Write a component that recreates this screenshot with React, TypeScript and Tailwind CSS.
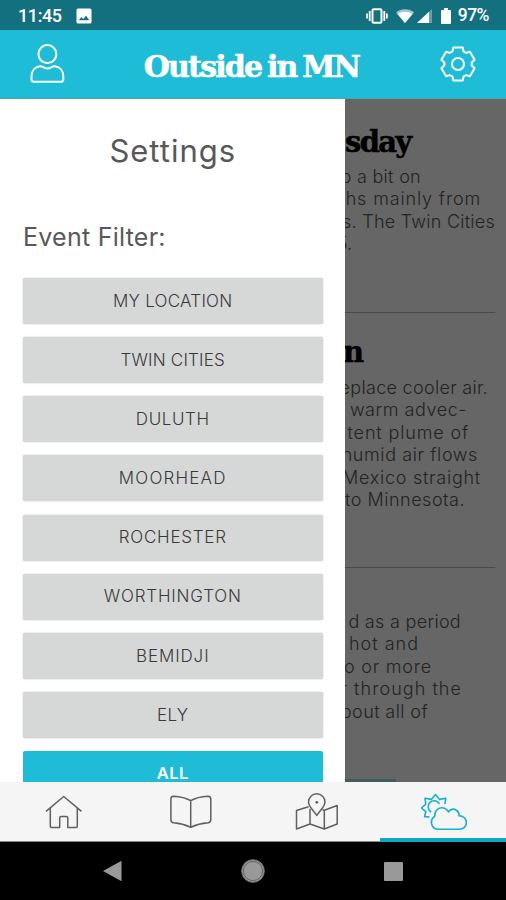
import type { ReactNode } from 'react';

const filters = [
  { label: 'MY LOCATION', tracking: 'tracking-[0.25px]' },
  { label: 'TWIN CITIES', tracking: 'tracking-[0.2px]' },
  { label: 'DULUTH', tracking: 'tracking-[0.6px]' },
  { label: 'MOORHEAD', tracking: 'tracking-[1.2px]' },
  { label: 'ROCHESTER', tracking: 'tracking-[0.75px]' },
  { label: 'WORTHINGTON', tracking: 'tracking-[0.8px]' },
  { label: 'BEMIDJI', tracking: 'tracking-[0.9px]' },
  { label: 'ELY', tracking: 'tracking-[0.4px]' },
];

const forecast = [
  { text: 'up a bit on', style: 'pr-[85px] tracking-[0.3px]' },
  { text: 'ths mainly from', style: 'pr-[25px] tracking-[0.85px]' },
  { text: 's. The Twin Cities', style: 'pr-[11px] tracking-[0.25px]' },
  { text: '5.', style: 'pr-[154px]' },
];

const pattern = [
  { text: 'replace cooler air.', style: 'pr-[18px] tracking-[0.3px]' },
  { text: 'warm advec-', style: 'pr-[39px] tracking-[0.55px]' },
  { text: 'tent plume of', style: 'pr-[37px] tracking-[0.85px]' },
  { text: 'humid air flows', style: 'pr-[28px] tracking-[0.6px]' },
  { text: 'Mexico straight', style: 'pr-[25px] tracking-[0.75px]' },
  { text: 'to Minnesota.', style: 'pr-[41px] tracking-[0.5px]' },
];

const heatWave = [
  { text: 'd as a period', style: 'pr-[45px] tracking-[0.3px]' },
  { text: 'hot and', style: 'pr-[87px] tracking-[1px]' },
  { text: 'wo or more', style: 'pr-[74px] tracking-[0.8px]' },
  { text: 'r through the', style: 'pr-[44px] tracking-[1.05px]' },
  { text: 'about all of', style: 'pr-[78px] tracking-[0.4px]' },
];

function StatusBar() {
  return (
    <div className="h-[30px] bg-[#13707e] flex items-center justify-between pl-[18px] pr-[17px] text-white font-['Roboto',sans-serif] font-medium text-[18px] shrink-0">
      <div className="flex items-center gap-[14px] pt-px">
        <span className="tracking-[-0.4px]">11:45</span>
        <svg width="16" height="16" viewBox="0 0 16 16">
          <path fill="#fff" fillRule="evenodd" d="M2 0.5h12a1.5 1.5 0 0 1 1.5 1.5v12a1.5 1.5 0 0 1-1.5 1.5H2A1.5 1.5 0 0 1 .5 14V2A1.5 1.5 0 0 1 2 .5ZM2.7 12.3h10.6L10 7.8l-2.7 3.3-1.8-2Z" />
        </svg>
      </div>
      <div className="flex items-center pt-px">
        <svg width="22" height="16" viewBox="0 0 22 16" fill="none" stroke="#fff" className="mr-[8px]">
          <rect x="6.5" y="1.2" width="9" height="13.6" rx="1.2" strokeWidth="2" />
          <path strokeWidth="1.8" d="M3.7 3v10M18.3 3v10M1.1 5.5v5M20.9 5.5v5" />
        </svg>
        <svg width="18" height="14" viewBox="0 0 18 14" className="mr-[3px]">
          <path fill="#fff" fillOpacity="0.6" d="M0 3.2C5-.8 13-.8 18 3.2L9 14Z" />
          <path fill="#fff" d="M1.500 5C6 2 12 2 16.500 5L9 14Z" />
        </svg>
        <svg width="15" height="14" viewBox="0 0 15 14" className="mr-[9px]">
          <path fill="#fff" fillOpacity="0.35" d="M0 14 15 0v14Z" />
          <path fill="#fff" d="M0 14 12 2.800V14Z" />
        </svg>
        <svg width="10" height="16" viewBox="0 0 10 16" className="mr-[7px]">
          <path fill="#fff" d="M3 0h4v2h2q1 0 1 1v12q0 1-1 1H1q-1 0-1-1V3q0-1 1-1h2Z" />
        </svg>
        <span className="text-[17.5px] tracking-[-0.5px]">97%</span>
      </div>
    </div>
  );
}

function Header() {
  return (
    <div className="h-[69px] bg-[#1ebcd6] flex items-center justify-between px-[27px] shrink-0 border-b border-[#4aa5b3]">
      <svg width="40" height="44" viewBox="0 0 40 44" fill="none" stroke="#fff" strokeWidth="2" strokeLinejoin="round">
        <circle cx="20.4" cy="12.100" r="9" />
        <path d="M12.800 24.300C16 24 17 26.600 20.400 26.600S24.800 24 28 24.300C33.500 25 36.300 29.500 36.300 34.500V37.500Q36.300 39.800 34 39.800H6.800Q4.500 39.800 4.500 37.500V34.500C4.500 29.500 7.300 25 12.800 24.300Z" />
      </svg>
      <h1 className="mt-[5px] mr-[3px] text-white font-['DejaVu_Serif',serif] font-bold text-[30px] leading-none tracking-[-1.800px] [word-spacing:-3px] [-webkit-text-stroke:0.6px_white] whitespace-nowrap">
        Outside in MN
      </h1>
      <svg width="40" height="40" viewBox="-19 -20 40 40" fill="none" stroke="#fff" strokeWidth="2" strokeLinejoin="round">
        <path d="M-4.700-16.500H4.700L5.500-12.700 8.200-11.100 11.900-12.300 16.600-4.200 13.700-1.600V1.600L16.600 4.200 11.900 12.300 8.200 11.100 5.500 12.700 4.700 16.500H-4.700L-5.500 12.700-8.200 11.100-11.900 12.300-16.600 4.200-13.700 1.600V-1.600L-16.600-4.200-11.900-12.300-8.200-11.100-5.500-12.700Z" />
        <circle r="6" />
      </svg>
    </div>
  );
}

function SettingsDrawer() {
  return (
    <div className="w-[345px] bg-white shrink-0 pl-[23px] pr-[22.5px] overflow-hidden text-[#58585a]">
      <h2 className="mt-[32px] h-[40px] leading-[40px] text-center text-[31px] tracking-[1px]">Settings</h2>
      <h3 className="mt-[46px] h-[40px] leading-[40px] text-[25px] tracking-[0.25px] whitespace-nowrap">
        Event Filter:
      </h3>
      <div className="mt-[21px] flex flex-col gap-[13.150px]">
        {filters.map((filter) => (
          <button
            key={filter.label}
            className={`h-[46px] w-full shrink-0 rounded-[2px] bg-[#d6d8d7] shadow-[0_0_1.500px_rgba(0,0,0,0.3)] text-[#3a3a3a] text-[17px] font-light pt-px ${filter.tracking}`}
          >
            {filter.label}
          </button>
        ))}
        <button className="h-[46px] w-full shrink-0 rounded-[2px] bg-[#1ebcd6] text-white text-[16.5px] font-semibold tracking-[0.5px] pb-[2px]">
          ALL
        </button>
      </div>
    </div>
  );
}

function Lines({ lines }: { lines: { text: string; style: string }[] }) {
  return (
    <div className="text-[18px] leading-[22.400px] text-[#232323] font-[350]">
      {lines.map((line) => (
        <div key={line.text} className={`flex justify-end whitespace-nowrap ${line.style}`}>
          {line.text}
        </div>
      ))}
    </div>
  );
}

function Heading({ children }: { children: ReactNode }) {
  return (
    <h2 className="h-[36px] leading-[36px] font-['DejaVu_Serif',serif] font-bold text-[29px] tracking-[-1.700px] [-webkit-text-stroke:0.5px_black] text-black">
      {children}
    </h2>
  );
}

function Forecast() {
  return (
    <div className="flex-1 bg-[#666666] overflow-hidden flex flex-col">
      <section className="h-[214px] shrink-0 mr-[11px] border-b border-[#4b4b4b]">
        <div className="pt-[25px] -mr-[11px]">
          <Heading>sday</Heading>
          <div className="pt-[6px]">
            <Lines lines={forecast} />
          </div>
        </div>
      </section>
      <section className="h-[255px] shrink-0 mr-[11px] border-b border-[#4b4b4b]">
        <div className="pt-[21px] -mr-[11px]">
          <div className="-ml-[2px]">
            <Heading>n</Heading>
          </div>
          <div className="pt-[7px]">
            <Lines lines={pattern} />
          </div>
        </div>
      </section>
      <section className="pt-[43px] flex-1 flex flex-col justify-between">
        <Lines lines={heatWave} />
        <div className="h-[3px] w-[51px] bg-[#405c5d]" />
      </section>
    </div>
  );
}

function TabBar() {
  return (
    <div className="h-[60px] bg-[#f5f5f5] grid grid-cols-4 shrink-0 text-[#606060]">
      <div className="flex items-center justify-center border-b border-[#8a8a8a]">
        <svg width="48" height="40" viewBox="0 0 48 40" fill="none" stroke="currentColor" strokeWidth="1.500" strokeLinejoin="round">
          <path d="M7 19.300 24.700 4.500 42.500 19.300M11.300 16.200V34.200Q11.300 35.500 12.600 35.500H20.700V26Q20.700 24.500 22.200 24.500H27.300Q28.800 24.500 28.800 26V35.500H37Q38.300 35.500 38.300 34.200V16.200" />
        </svg>
      </div>
      <div className="flex items-center justify-center border-b border-[#8a8a8a]">
        <svg width="48" height="40" viewBox="0 0 48 40" fill="none" stroke="currentColor" strokeWidth="1.500" strokeLinejoin="round">
          <path d="M24.700 8.700C20 6 13 4.600 7.500 4.300Q4.900 4.300 4.900 7V27.500Q4.900 30.500 7.500 30.800C13 31.200 20 33 24.700 35.200C29.400 33 36.400 31.200 42 30.800Q44.800 30.500 44.800 27.500V7Q44.800 4.300 42 4.300C36.400 4.600 29.400 6 24.700 8.700ZM24.700 8.700V35.200" />
        </svg>
      </div>
      <div className="flex items-center justify-center border-b border-[#8a8a8a]">
        <svg width="48" height="40" viewBox="0 0 48 40" fill="none" stroke="currentColor" strokeWidth="1.500" strokeLinejoin="round">
          <path d="M16.500 14.800 4.500 18.500V37L18 32 32.300 37 45.200 32V13.500L32.300 18.300 30.500 17.700M18 16.800V32M32.300 18.300V37" />
          <path d="M24.800 23.500C22 18.500 16.500 15 16.500 10A8.200 8.200 0 0 1 33 10C33 15 27.600 18.500 24.800 23.500Z" />
          <circle cx="24.800" cy="10.300" r="1.400" fill="currentColor" stroke="none" />
        </svg>
      </div>
      <div className="flex items-center justify-center text-[#14b1cc] border-b-4 border-[#0fa8c0]">
        <svg width="48" height="40" viewBox="0 0 48 40" fill="none" stroke="currentColor" strokeWidth="1.600" strokeLinejoin="round" className="mt-[4px]">
          <path d="M10.300 24.900 5.600 24.800 6.800 19.700 2.500 16 6.800 12.200 6 6.200 12.300 7.400 16.500 2.500 20.600 7.400 26.800 6.200 25.900 12M20.500 12A6 6 0 1 0 12.300 20" />
          <path d="M19.300 37.300A7 7 0 0 1 15.700 24.400C15.500 19.500 18.500 15.700 22.500 15.700 26 15.700 28.300 17.500 29.500 20 31 17.200 34.500 16.400 37 18 39.300 19.300 40.300 21.300 39.900 23.700 44.500 23.800 47.400 26.800 47.400 30.500 47.400 34.500 44.300 37.300 40.500 37.300Z" />
        </svg>
      </div>
    </div>
  );
}

function NavigationBar() {
  return (
    <div className="h-[58px] bg-black flex items-center justify-between pl-[103px] pr-[103px] shrink-0">
      <svg width="19" height="22" viewBox="0 0 19 22">
        <path fill="#999" d="M18.500.8V21.200L0 11Z" />
      </svg>
      <svg width="24" height="24" viewBox="0 0 24 24">
        <circle cx="12" cy="12" r="11.300" fill="#999" stroke="#777" />
        <circle cx="12" cy="12" r="9.600" fill="none" stroke="#555" strokeWidth="0.800" />
      </svg>
      <div className="w-[19px] h-[19px] rounded-[1px] bg-[#999]" />
    </div>
  );
}

export default function App() {
  return (
    <div className="w-[506px] h-[900px] flex flex-col overflow-hidden font-['Inter',sans-serif]">
      <StatusBar />
      <Header />
      <div className="h-[683px] flex shrink-0 overflow-hidden">
        <SettingsDrawer />
        <Forecast />
      </div>
      <TabBar />
      <NavigationBar />
    </div>
  );
}
